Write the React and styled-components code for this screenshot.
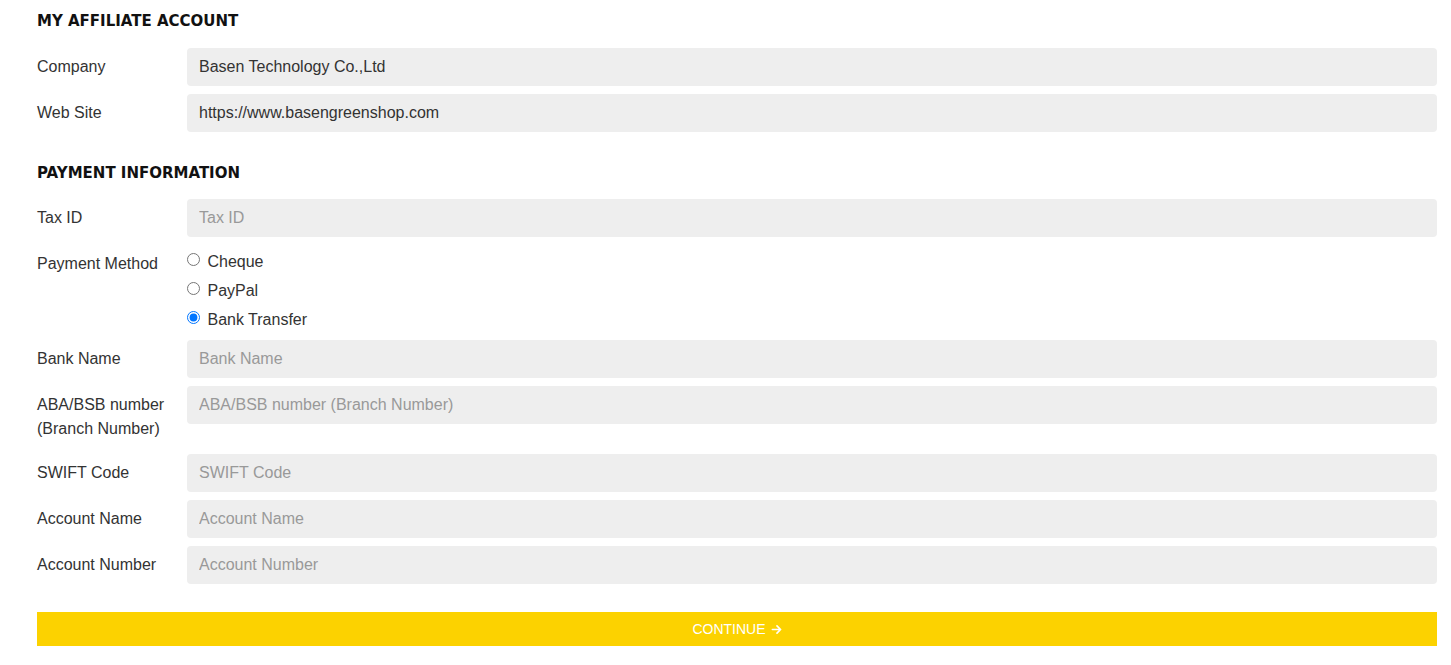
import React, { useState } from 'react'
import styled, { createGlobalStyle } from 'styled-components'

const GlobalStyle = createGlobalStyle`
  body {
    margin: 0;
    background: #fff;
    font-family: "Liberation Sans", Arial, sans-serif;
    color: #333;
  }
`

const Form = styled.form`
  width: 1400px;
  margin-left: 37px;
  padding-top: 10px;
`

const Heading = styled.h2`
  margin: ${p => (p.first ? '1px' : '31px')} 0 ${p => (p.first ? '17px' : '16px')};
  font-family: "DejaVu Sans", Verdana, sans-serif;
  font-size: 15px;
  font-weight: bold;
  line-height: 20px;
  color: #111;
`

const Rows = styled.div`
  display: flex;
  flex-direction: column;
  gap: 8px;
`

const Row = styled.div`
  display: grid;
  grid-template-columns: 150px 1fr;
  align-items: start;
`

const Label = styled.label`
  font-size: 16px;
  line-height: 24px;
  padding: 7px 0 ${p => (p.wrap ? '5px' : '0')};
  color: #333;
`

const Input = styled.input`
  box-sizing: border-box;
  width: 100%;
  height: 38px;
  border: none;
  border-radius: 4px;
  background: #eee;
  padding: 0 12px;
  font-family: "Liberation Sans", Arial, sans-serif;
  font-size: 16px;
  color: #333;
  outline: none;
  &::placeholder {
    color: #999;
  }
`

const RadioGroup = styled.div`
  display: flex;
  flex-direction: column;
  padding-top: 2px;
  margin-bottom: -2px;
`

const Option = styled.label`
  height: 29px;
  line-height: 29px;
  font-size: 16px;
  color: #333;
  input {
    margin: 0 3px 0 0;
    vertical-align: text-top;
  }
`

const Continue = styled.button`
  display: flex;
  align-items: center;
  justify-content: center;
  gap: 5px;
  width: 100%;
  height: 34px;
  margin-top: 28px;
  border: none;
  background: #fcd200;
  color: #fff;
  font-family: "Liberation Sans", Arial, sans-serif;
  font-size: 14px;
  cursor: pointer;
`

const Arrow = () => (
  <svg width="11" height="11" viewBox="0 0 12 12" fill="none" stroke="#fff" strokeWidth="1.8" strokeLinecap="round" strokeLinejoin="round">
    <path d="M1.5 6h9M6.5 2l4 4-4 4" />
  </svg>
)

const bankFields = [
  { label: 'Bank Name' },
  { label: 'ABA/BSB number (Branch Number)', wrap: true },
  { label: 'SWIFT Code' },
  { label: 'Account Name' },
  { label: 'Account Number' },
]

export default function App() {
  const [method, setMethod] = useState('bank')

  return (
    <>
      <GlobalStyle />
      <Form onSubmit={e => e.preventDefault()}>
        <Heading first>MY AFFILIATE ACCOUNT</Heading>
        <Rows>
          <Row>
            <Label>Company</Label>
            <Input defaultValue="Basen Technology Co.,Ltd" />
          </Row>
          <Row>
            <Label>Web Site</Label>
            <Input defaultValue="https://www.basengreenshop.com" />
          </Row>
        </Rows>

        <Heading>PAYMENT INFORMATION</Heading>
        <Rows>
          <Row>
            <Label>Tax ID</Label>
            <Input placeholder="Tax ID" />
          </Row>
          <Row>
            <Label>Payment Method</Label>
            <RadioGroup>
              {[
                ['cheque', 'Cheque'],
                ['paypal', 'PayPal'],
                ['bank', 'Bank Transfer'],
              ].map(([v, t]) => (
                <Option key={v}>
                  <input type="radio" name="method" checked={method === v} onChange={() => setMethod(v)} /> {t}
                </Option>
              ))}
            </RadioGroup>
          </Row>
          {bankFields.map(f => (
            <Row key={f.label}>
              <Label wrap={f.wrap ? 1 : 0}>{f.label}</Label>
              <Input placeholder={f.label} />
            </Row>
          ))}
        </Rows>

        <Continue type="submit">
          CONTINUE <Arrow />
        </Continue>
      </Form>
    </>
  )
}
